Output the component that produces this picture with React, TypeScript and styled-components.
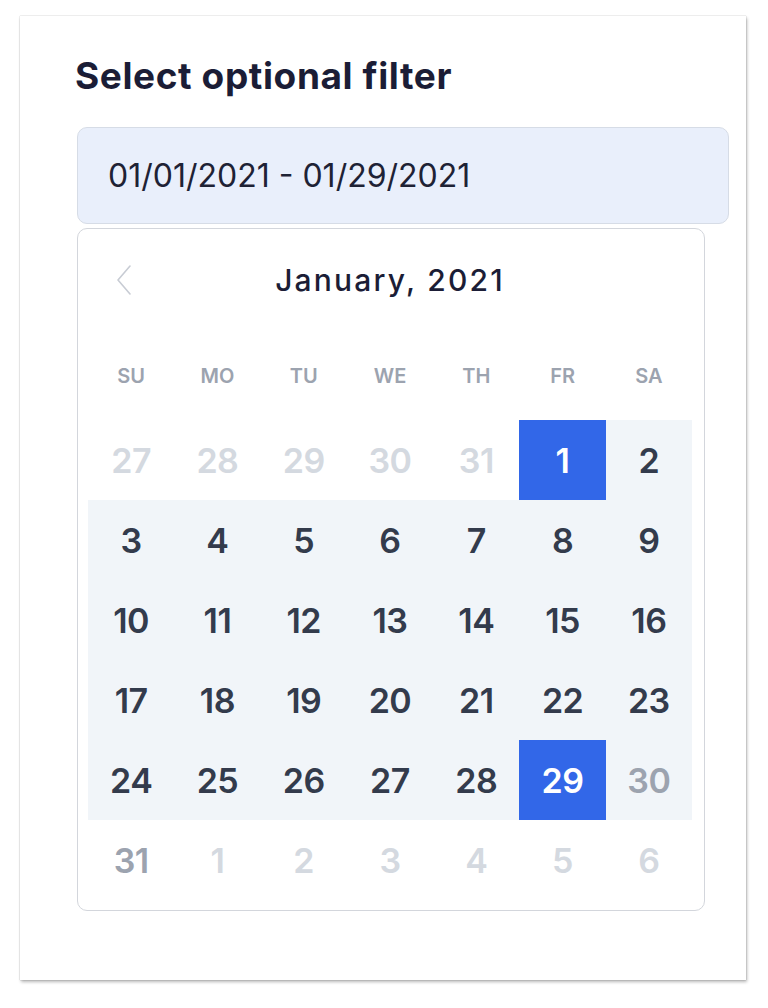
import React from "react";
import styled, { createGlobalStyle, css } from "styled-components";

const GlobalStyle = createGlobalStyle`
  html, body {
    margin: 0;
    padding: 0;
    background: #ffffff;
  }
  body {
    font-family: "Inter", "Noto Sans", sans-serif;
  }
`;

const Page = styled.div`
  padding: 16px 22px 28px 20px;
`;

const Card = styled.section`
  box-sizing: border-box;
  width: 726px;
  height: 964px;
  background: #ffffff;
  box-shadow: 1px 2px 3px rgba(0, 0, 0, 0.28), 0 0 1px rgba(0, 0, 0, 0.35);
  padding: 34px 17px 0 57px;
`;

const Title = styled.h2`
  margin: 0 0 0 -2px;
  font-family: "Inter", sans-serif;
  font-weight: 700;
  font-size: 37px;
  line-height: 52px;
  letter-spacing: 0.6px;
  color: #1b1d36;
`;

const Field = styled.div`
  position: relative;
  margin-top: 25px;
`;

const DateInput = styled.div`
  box-sizing: border-box;
  height: 97px;
  display: flex;
  align-items: center;
  padding-left: 30px;
  background: #e9effb;
  border: 1px solid #d6dce6;
  border-radius: 10px;
  font-family: "Inter", sans-serif;
  font-size: 32px;
  font-weight: 400;
  letter-spacing: 0;
  color: #1e2235;
`;

const Popup = styled.div`
  position: absolute;
  top: calc(100% + 4px);
  left: 0;
  box-sizing: border-box;
  width: 628px;
  height: 683px;
  background: #ffffff;
  border: 1px solid #d3d6dc;
  border-radius: 10px;
  padding: 10px 12px 10px 10px;
`;

const Header = styled.div`
  display: grid;
  grid-template-columns: 1fr auto 1fr;
  align-items: center;
  height: 82px;
`;

const PrevButton = styled.button`
  justify-self: start;
  margin-left: 27px;
  padding: 0;
  border: 0;
  background: none;
  width: 18px;
  height: 30px;
  display: flex;
  align-items: center;
  justify-content: center;
  cursor: pointer;
`;

const MonthLabel = styled.div`
  font-family: "Inter", sans-serif;
  font-weight: 500;
  font-size: 30px;
  letter-spacing: 2.2px;
  color: #1b1d36;
`;

const WeekRow = styled.div`
  display: grid;
  grid-template-columns: repeat(7, 1fr);
  align-items: center;
  box-sizing: border-box;
  height: 99px;
  padding-top: 11px;
`;

const WeekDay = styled.div`
  text-align: center;
  font-family: "Inter", sans-serif;
  font-weight: 600;
  font-size: 20px;
  color: #9ca3af;
`;

const DayGrid = styled.div`
  display: grid;
  grid-template-columns: repeat(7, 1fr);
  grid-auto-rows: 80px;
`;

type Tone = "out" | "normal" | "muted" | "selected";

const toneColor: Record<Tone, string> = {
  out: "#d4d9e0",
  normal: "#333b4c",
  muted: "#9ca3af",
  selected: "#ffffff",
};

const Day = styled.div<{ $tone: Tone; $inRange: boolean }>`
  display: flex;
  align-items: center;
  justify-content: center;
  font-family: "Inter", sans-serif;
  font-weight: 600;
  font-size: 34px;
  letter-spacing: -0.5px;
  color: ${(p) => toneColor[p.$tone]};
  background: ${(p) => (p.$inRange ? "#f1f5f9" : "transparent")};
  ${(p) =>
    p.$tone === "selected" &&
    css`
      background: #3267e8;
    `}
`;

type Cell = { n: number; tone: Tone; inRange: boolean };

const buildCells = (): Cell[] => {
  const cells: Cell[] = [];
  [27, 28, 29, 30, 31].forEach((n) => cells.push({ n, tone: "out", inRange: false }));
  for (let d = 1; d <= 31; d++) {
    if (d === 1 || d === 29) cells.push({ n: d, tone: "selected", inRange: true });
    else if (d === 30) cells.push({ n: d, tone: "muted", inRange: true });
    else if (d === 31) cells.push({ n: d, tone: "muted", inRange: false });
    else cells.push({ n: d, tone: "normal", inRange: true });
  }
  [1, 2, 3, 4, 5, 6].forEach((n) => cells.push({ n, tone: "out", inRange: false }));
  return cells;
};

const weekDays = ["SU", "MO", "TU", "WE", "TH", "FR", "SA"];

const ChevronLeft = () => (
  <svg width="16" height="30" viewBox="0 0 16 30" fill="none">
    <polyline
      points="14,1 2,15 14,29"
      stroke="#c8ccd4"
      strokeWidth="1.6"
      strokeLinecap="round"
      strokeLinejoin="round"
      fill="none"
    />
  </svg>
);

export default function App() {
  const cells = buildCells();
  return (
    <>
      <GlobalStyle />
      <Page>
        <Card>
          <Title>Select optional filter</Title>
          <Field>
            <DateInput>01/01/2021 - 01/29/2021</DateInput>
            <Popup>
              <Header>
                <PrevButton aria-label="Previous month">
                  <ChevronLeft />
                </PrevButton>
                <MonthLabel>January, 2021</MonthLabel>
                <span />
              </Header>
              <WeekRow>
                {weekDays.map((w) => (
                  <WeekDay key={w}>{w}</WeekDay>
                ))}
              </WeekRow>
              <DayGrid>
                {cells.map((c, i) => (
                  <Day key={i} $tone={c.tone} $inRange={c.inRange}>
                    {c.n}
                  </Day>
                ))}
              </DayGrid>
            </Popup>
          </Field>
        </Card>
      </Page>
    </>
  );
}
